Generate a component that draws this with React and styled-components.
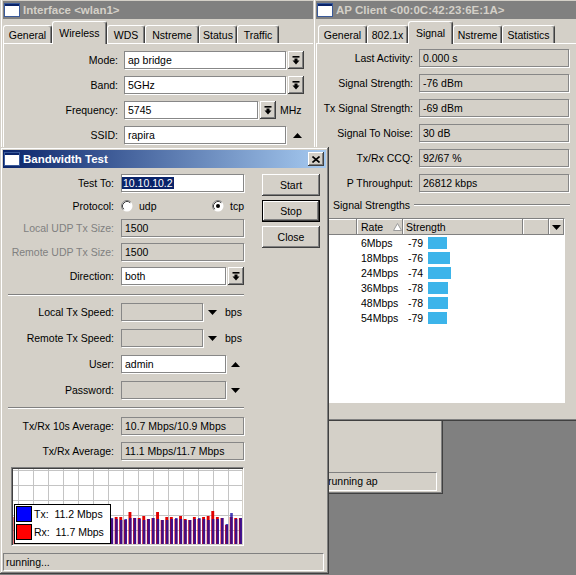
import React from 'react';
import styled, { createGlobalStyle, css } from 'styled-components';

const GlobalStyle = createGlobalStyle`
  html, body { margin: 0; padding: 0; }
  body {
    background: #808080;
    font-family: "Liberation Sans", Arial, sans-serif;
    font-size: 10.5px;
    color: #000;
  }
`;

const raised = css`
  box-shadow: inset -1px -1px #404040, inset 1px 1px #fff,
    inset -2px -2px #808080, inset 2px 2px #d4d0c8;
`;

const sunkenThin = css`
  border: 1px solid;
  border-color: #808080 #fff #fff #808080;
`;

const Desktop = styled.div`
  position: relative;
  width: 576px;
  height: 575px;
  overflow: hidden;
  background: #808080;
`;

const Window = styled.div`
  position: absolute;
  left: ${p => p.$x}px;
  top: ${p => p.$y}px;
  width: ${p => p.$w}px;
  height: ${p => p.$h}px;
  z-index: ${p => p.$z};
  box-sizing: border-box;
  padding: 3px;
  display: flex;
  flex-direction: column;
  background: #d4d0c8;
  box-shadow: inset -1px -1px #404040, inset 1px 1px #d4d0c8,
    inset -2px -2px #808080, inset 2px 2px #fff;
`;

const TitleBar = styled.div`
  flex: none;
  height: 18px;
  display: flex;
  align-items: center;
  gap: 3px;
  padding: 0 2px 0 1px;
  background: ${p => (p.$active ? 'linear-gradient(to right, #0a246a, #a6caf0)' : '#808080')};
  color: ${p => (p.$active ? '#fff' : '#d4d0c8')};
  font-size: 11.5px;
  font-weight: bold;
  white-space: nowrap;
  overflow: hidden;
`;

const CloseBtn = styled.div`
  margin-left: auto;
  width: 16px;
  height: 14px;
  display: flex;
  align-items: center;
  justify-content: center;
  background: #d4d0c8;
  ${raised}
`;

const TabStrip = styled.div`
  flex: none;
  height: 24px;
  display: flex;
  align-items: flex-end;
  padding-left: ${p => p.$inset}px;
  position: relative;
  z-index: 1;
`;

const Tab = styled.div`
  box-sizing: border-box;
  flex: none;
  width: ${p => p.$w}px;
  height: ${p => (p.$active ? 23 : 18)}px;
  margin-bottom: ${p => (p.$active ? -1 : 0)}px;
  display: flex;
  align-items: center;
  justify-content: center;
  background: #d4d0c8;
  border-top: 1px solid #fff;
  border-left: 1px solid #fff;
  border-right: 1px solid #404040;
  border-radius: 3px 3px 0 0;
  box-shadow: inset -1px 0 #808080;
  white-space: nowrap;
  position: relative;
  z-index: ${p => (p.$active ? 2 : 1)};
`;

const Panel = styled.div`
  flex: 1;
  min-height: 0;
  overflow: hidden;
  border-top: 1px solid #fff;
  border-left: 1px solid #fff;
  padding-top: ${p => p.$top}px;
  display: flex;
  flex-direction: column;
  gap: 7px;
`;

const Row = styled.div`
  flex: none;
  display: flex;
  align-items: center;
  height: ${p => p.$h || 18}px;
`;

const Label = styled.div`
  flex: none;
  width: ${p => p.$w}px;
  margin-right: ${p => p.$gap}px;
  text-align: right;
  white-space: nowrap;
  color: ${p => (p.$disabled ? '#808080' : '#000')};
`;

const Field = styled.div`
  box-sizing: border-box;
  flex: none;
  width: ${p => p.$w}px;
  height: 18px;
  padding: 0 ${p => (p.$tight ? 0 : 3)}px;
  line-height: 16px;
  background: ${p => (p.$white ? '#fff' : '#d4d0c8')};
  border: 1px solid #878787;
  box-shadow: 1px 1px 0 #fff;
  white-space: nowrap;
  overflow: hidden;
`;

const Selected = styled.span`
  background: #0a246a;
  color: #fff;
  padding: 0 1px;
`;

const ComboBtn = styled.div`
  flex: none;
  width: 16px;
  height: 18px;
  margin-left: 2px;
  display: flex;
  align-items: center;
  justify-content: center;
  background: #d4d0c8;
  ${raised}
`;

const ArrowBox = styled.div`
  flex: none;
  display: flex;
  margin-left: ${p => p.$ml}px;
`;

const Unit = styled.div`
  flex: none;
  margin-left: ${p => p.$ml}px;
`;

const Body = styled.div`
  flex: 1;
  display: flex;
  padding-top: 6px;
  min-height: 0;
`;

const FormCol = styled.div`
  flex: none;
  width: 241px;
  display: flex;
  flex-direction: column;
`;

const Group = styled.div`
  display: flex;
  flex-direction: column;
  gap: ${p => p.$gap}px;
`;

const Separator = styled.div`
  flex: none;
  height: 0;
  margin: ${p => p.$mt}px 0 ${p => p.$mb}px 5px;
  border-top: 1px solid #808080;
  border-bottom: 1px solid #fff;
`;

const RadioGroup = styled.div`
  flex: none;
  width: 123px;
  display: flex;
  justify-content: space-between;
`;

const RadioItem = styled.div`
  display: flex;
  align-items: center;
  gap: 6px;
`;

const ButtonCol = styled.div`
  flex: none;
  margin-left: 18px;
  display: flex;
  flex-direction: column;
  gap: 4px;
`;

const Button = styled.div`
  box-sizing: border-box;
  width: 58px;
  height: 22px;
  display: flex;
  align-items: center;
  justify-content: center;
  background: #d4d0c8;
  ${raised}
  ${p => p.$default && css`
    border: 1px solid #000;
  `}
`;

const Graph = styled.div`
  position: relative;
  flex: none;
  box-sizing: border-box;
  width: 233px;
  height: 79px;
  margin: 7px 0 0 8px;
  padding: 1px;
  background: #fff;
  ${sunkenThin}
  box-shadow: inset 1px 1px #404040, inset -1px -1px #d4d0c8;
  svg { display: block; }
`;

const Legend = styled.div`
  position: absolute;
  left: 2px;
  top: 36px;
  width: 97px;
  box-sizing: border-box;
  background: #fff;
  border: 1px solid #000;
  padding: 1px 1px 3px;
  display: flex;
  flex-direction: column;
  gap: 2px;
`;

const LegendRow = styled.div`
  display: flex;
  align-items: center;
  gap: 2px;
  height: 16px;
  white-space: pre;
`;

const Swatch = styled.span`
  width: 14px;
  height: 14px;
  border: 1px solid #000;
  background: ${p => p.$c};
`;

const StatusBar = styled.div`
  flex: none;
  height: ${p => p.$h}px;
  display: flex;
  gap: 2px;
  margin-right: ${p => p.$mr}px;
`;

const StatusCell = styled.div`
  box-sizing: border-box;
  flex: ${p => (p.$w ? `0 0 ${p.$w}px` : 1)};
  padding-left: ${p => p.$pl || 2}px;
  line-height: ${p => p.$lh}px;
  white-space: nowrap;
  overflow: hidden;
  ${sunkenThin}
`;

const GroupTitle = styled.div`
  flex: none;
  height: 12px;
  display: flex;
  align-items: center;
  margin-left: 16px;
  margin-right: 15px;
  white-space: nowrap;
  &::after {
    content: '';
    flex: 1;
    margin-left: 4px;
    border-top: 1px solid #808080;
    border-bottom: 1px solid #fff;
  }
`;

const cols = '35px 46px 120px 26px 15px';

const Table = styled.div`
  flex: none;
  box-sizing: border-box;
  width: 244px;
  height: 185px;
  margin-left: 4px;
  background: #fff;
  ${sunkenThin}
`;

const HeadRow = styled.div`
  display: grid;
  grid-template-columns: ${cols};
  height: 16px;
`;

const HeadCell = styled.div`
  display: flex;
  align-items: center;
  padding-left: ${p => p.$pl || 0}px;
  justify-content: ${p => (p.$center ? 'center' : 'flex-start')};
  gap: 10px;
  background: #d4d0c8;
  box-shadow: inset -1px -1px #808080, inset 1px 1px #fff;
`;

const BodyRow = styled.div`
  display: grid;
  grid-template-columns: ${cols};
  height: 15px;
  align-items: center;
`;

const Cell = styled.div`
  display: flex;
  align-items: center;
  padding-left: ${p => p.$pl || 0}px;
  white-space: nowrap;
`;

const Num = styled.span`
  flex: none;
  width: 20px;
`;

const Bar = styled.span`
  height: 12px;
  background: #3cb4ea;
`;

const WinIcon = () => (
  <svg width="16" height="14" viewBox="0 0 16 14">
    <rect x="0.5" y="0.5" width="15" height="13" fill="#fff" stroke="#3a5a9a" />
    <rect x="1" y="1" width="14" height="2" fill="#0a246a" />
  </svg>
);

const CloseIcon = () => (
  <svg width="8" height="7" viewBox="0 0 8 7">
    <path d="M0.5 0.5 L7.5 6.5 M7.5 0.5 L0.5 6.5" stroke="#000" strokeWidth="1.6" />
  </svg>
);

const ComboIcon = () => (
  <svg width="8" height="9" viewBox="0 0 8 9">
    <rect x="0.5" y="0" width="7" height="1.6" fill="#000" />
    <path d="M2.5 2.6 H5.5 V4.6 H7.5 L4 8.4 L0.5 4.6 H2.5 Z" fill="#000" />
  </svg>
);

const Arrow = ({ up }) => (
  <svg width="9" height="5" viewBox="0 0 9 5">
    <polygon points={up ? '0,5 9,5 4.5,0' : '0,0 9,0 4.5,5'} fill="#000" />
  </svg>
);

const SortIcon = () => (
  <svg width="9" height="8" viewBox="0 0 9 8">
    <polygon points="4.5,0.5 8.5,7.5 0.5,7.5" fill="#fff" stroke="#9a9a9a" />
  </svg>
);

const Radio = ({ checked }) => (
  <svg width="12" height="12" viewBox="0 0 12 12">
    <circle cx="6" cy="6" r="5.5" fill="#fff" />
    <path d="M2.11 9.89 A5.5 5.5 0 0 1 9.89 2.11" stroke="#808080" fill="none" />
    <path d="M2.82 9.18 A4.5 4.5 0 0 1 9.18 2.82" stroke="#404040" fill="none" />
    {checked && <circle cx="6" cy="6" r="2" fill="#000" />}
  </svg>
);

const ifaceTabs = [
  { label: 'General', w: 49 },
  { label: 'Wireless', w: 55, active: true },
  { label: 'WDS', w: 38 },
  { label: 'Nstreme', w: 54 },
  { label: 'Status', w: 38 },
  { label: 'Traffic', w: 42 },
];

const apTabs = [
  { label: 'General', w: 49 },
  { label: '802.1x', w: 41 },
  { label: 'Signal', w: 45, active: true },
  { label: 'Nstreme', w: 49 },
  { label: 'Statistics', w: 53 },
];

const apFields = [
  ['Last Activity:', '0.000 s'],
  ['Signal Strength:', '-76 dBm'],
  ['Tx Signal Strength:', '-69 dBm'],
  ['Signal To Noise:', '30 dB'],
  ['Tx/Rx CCQ:', '92/67 %'],
  ['P Throughput:', '26812 kbps'],
];

const rates = [
  ['6Mbps', '-79', 19],
  ['18Mbps', '-76', 22],
  ['24Mbps', '-74', 23],
  ['36Mbps', '-78', 20],
  ['48Mbps', '-78', 20],
  ['54Mbps', '-79', 19],
];

const samples = Array.from({ length: 50 }, (_, i) => {
  let red = 26 + Math.round(Math.sin(i * 2.3) * 1.5 + Math.cos(i * 0.9) * 0.8);
  let blue = 25 + Math.round(Math.sin(i * 1.3) * 0.8);
  if (i === 25 || i === 31) red = 32;
  if (i === 43) red = 33;
  if (i === 47) blue = 31;
  if (i === 46) {
    red = 19;
    blue = 20;
  }
  return { red, blue };
});

const TrafficGraph = () => (
  <svg width="229" height="75" viewBox="0 0 229 75">
    {Array.from({ length: 16 }, (_, k) => (
      <line key={`v${k}`} x1={5.5 + k * 15} y1="0" x2={5.5 + k * 15} y2="75" stroke="#c4c4c4" />
    ))}
    {Array.from({ length: 5 }, (_, k) => (
      <line key={`h${k}`} x1="0" y1={1.5 + k * 15} x2="229" y2={1.5 + k * 15} stroke="#c4c4c4" />
    ))}
    {samples.map((s, i) => {
      const x = 0.5 + i * 4.6;
      return (
        <g key={i}>
          <rect x={x} y={75 - s.red} width="2.9" height={s.red} fill="#e00000" />
          <rect x={x + 0.5} y={75 - s.blue} width="2.6" height={s.blue} fill="#1a10a8" opacity="0.8" />
        </g>
      );
    })}
  </svg>
);

const InterfaceWindow = () => (
  <Window $x={0} $y={-2} $w={443} $h={496} $z={1}>
    <TitleBar>
      <WinIcon />
      <span>Interface {'<wlan1>'}</span>
    </TitleBar>
    <TabStrip $inset={0}>
      {ifaceTabs.map(t => (
        <Tab key={t.label} $w={t.w} $active={t.active}>{t.label}</Tab>
      ))}
    </TabStrip>
    <Panel $top={7}>
      <Row>
        <Label $w={114} $gap={6}>Mode:</Label>
        <Field $w={162} $white>ap bridge</Field>
        <ComboBtn><ComboIcon /></ComboBtn>
      </Row>
      <Row>
        <Label $w={114} $gap={6}>Band:</Label>
        <Field $w={162} $white>5GHz</Field>
        <ComboBtn><ComboIcon /></ComboBtn>
      </Row>
      <Row>
        <Label $w={114} $gap={6}>Frequency:</Label>
        <Field $w={134} $white>5745</Field>
        <ComboBtn><ComboIcon /></ComboBtn>
        <Unit $ml={4}>MHz</Unit>
      </Row>
      <Row>
        <Label $w={114} $gap={6}>SSID:</Label>
        <Field $w={162} $white>rapira</Field>
        <ArrowBox $ml={7}><Arrow up /></ArrowBox>
      </Row>
    </Panel>
    <StatusBar $h={19} $mr={3}>
      <StatusCell $w={80} $lh={17}>enabled</StatusCell>
      <StatusCell $w={80} $lh={17}>running</StatusCell>
      <StatusCell $w={80} $lh={17}>slave</StatusCell>
      <StatusCell $w={71} $lh={17} />
      <StatusCell $lh={17} $pl={5}>running ap</StatusCell>
    </StatusBar>
  </Window>
);

const ApClientWindow = () => (
  <Window $x={313} $y={-2} $w={275} $h={423} $z={2}>
    <TitleBar>
      <WinIcon />
      <span>AP Client {'<00:0C:42:23:6E:1A>'}</span>
    </TitleBar>
    <TabStrip $inset={2}>
      {apTabs.map(t => (
        <Tab key={t.label} $w={t.w} $active={t.active}>{t.label}</Tab>
      ))}
    </TabStrip>
    <Panel $top={5}>
      {apFields.map(([label, value]) => (
        <Row key={label}>
          <Label $w={96} $gap={6}>{label}</Label>
          <Field $w={150}>{value}</Field>
        </Row>
      ))}
      <GroupTitle>Signal Strengths</GroupTitle>
      <Table>
        <HeadRow>
          <HeadCell />
          <HeadCell $pl={4}>Rate <SortIcon /></HeadCell>
          <HeadCell $pl={3}>Strength</HeadCell>
          <HeadCell />
          <HeadCell $center><Arrow /></HeadCell>
        </HeadRow>
        {rates.map(([rate, dbm, w]) => (
          <BodyRow key={rate}>
            <Cell />
            <Cell $pl={4}>{rate}</Cell>
            <Cell $pl={5}>
              <Num>{dbm}</Num>
              <Bar style={{ width: w }} />
            </Cell>
            <Cell />
            <Cell />
          </BodyRow>
        ))}
      </Table>
    </Panel>
  </Window>
);

const BandwidthWindow = () => (
  <Window $x={0} $y={147} $w={329} $h={427} $z={3}>
    <TitleBar $active>
      <WinIcon />
      <span>Bandwidth Test</span>
      <CloseBtn><CloseIcon /></CloseBtn>
    </TitleBar>
    <Body>
      <FormCol>
        <Group $gap={6}>
          <Row>
            <Label $w={111} $gap={7}>Test To:</Label>
            <Field $w={123} $white $tight><Selected>10.10.10.2</Selected></Field>
          </Row>
          <Row $h={15}>
            <Label $w={111} $gap={7}>Protocol:</Label>
            <RadioGroup>
              <RadioItem><Radio /> udp</RadioItem>
              <RadioItem><Radio checked /> tcp</RadioItem>
            </RadioGroup>
          </Row>
          <Row>
            <Label $w={111} $gap={7} $disabled>Local UDP Tx Size:</Label>
            <Field $w={123}>1500</Field>
          </Row>
          <Row>
            <Label $w={111} $gap={7} $disabled>Remote UDP Tx Size:</Label>
            <Field $w={123}>1500</Field>
          </Row>
          <Row>
            <Label $w={111} $gap={7}>Direction:</Label>
            <Field $w={105} $white>both</Field>
            <ComboBtn><ComboIcon /></ComboBtn>
          </Row>
        </Group>
        <Separator $mt={9} $mb={7} />
        <Group $gap={8}>
          <Row>
            <Label $w={111} $gap={7}>Local Tx Speed:</Label>
            <Field $w={82} />
            <ArrowBox $ml={5}><Arrow /></ArrowBox>
            <Unit $ml={8}>bps</Unit>
          </Row>
          <Row>
            <Label $w={111} $gap={7}>Remote Tx Speed:</Label>
            <Field $w={82} />
            <ArrowBox $ml={5}><Arrow /></ArrowBox>
            <Unit $ml={8}>bps</Unit>
          </Row>
          <Row>
            <Label $w={111} $gap={7}>User:</Label>
            <Field $w={105} $white>admin</Field>
            <ArrowBox $ml={5}><Arrow up /></ArrowBox>
          </Row>
          <Row>
            <Label $w={111} $gap={7}>Password:</Label>
            <Field $w={105} />
            <ArrowBox $ml={5}><Arrow /></ArrowBox>
          </Row>
        </Group>
        <Separator $mt={8} $mb={8} />
        <Group $gap={7}>
          <Row>
            <Label $w={111} $gap={7}>Tx/Rx 10s Average:</Label>
            <Field $w={123}>10.7 Mbps/10.9 Mbps</Field>
          </Row>
          <Row>
            <Label $w={111} $gap={7}>Tx/Rx Average:</Label>
            <Field $w={123}>11.1 Mbps/11.7 Mbps</Field>
          </Row>
        </Group>
        <Graph>
          <TrafficGraph />
          <Legend>
            <LegendRow><Swatch $c="#0000ff" />Tx:  11.2 Mbps</LegendRow>
            <LegendRow><Swatch $c="#ff0000" />Rx:  11.7 Mbps</LegendRow>
          </Legend>
        </Graph>
      </FormCol>
      <ButtonCol>
        <Button>Start</Button>
        <Button $default>Stop</Button>
        <Button>Close</Button>
      </ButtonCol>
    </Body>
    <StatusBar $h={18} $mr={2}>
      <StatusCell $lh={16}>running...</StatusCell>
    </StatusBar>
  </Window>
);

export default function App() {
  return (
    <>
      <GlobalStyle />
      <Desktop>
        <InterfaceWindow />
        <ApClientWindow />
        <BandwidthWindow />
      </Desktop>
    </>
  );
}
